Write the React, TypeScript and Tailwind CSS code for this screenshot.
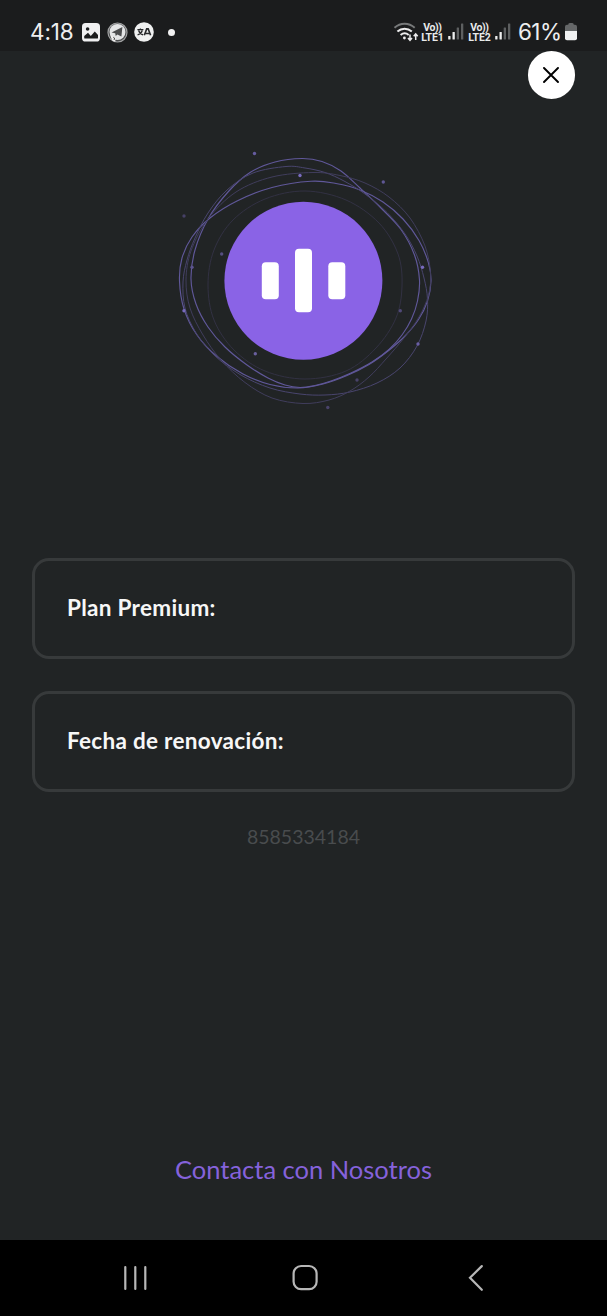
type Pt = [number, number];

const RINGS: { pts: Pt[]; color: string; width: number }[] = [
  {
    color: '#60589a', width: 1.15,
    pts: [[302, 158.5], [322, 161.5], [341, 171], [360, 188], [381, 208], [401, 229.5], [414.5, 255], [419.5, 280], [417.5, 301], [411.5, 319], [402, 335], [389, 349.5], [372, 362], [351, 373], [331, 381], [315, 385.5], [300, 387.5], [285, 385], [268, 378], [247, 365], [225, 347], [208, 327], [196, 304], [191, 279], [195, 250], [208, 219], [228, 192], [250, 172.5], [275, 162]],
  },
  {
    color: '#60589a', width: 1.15,
    pts: [[311, 181.3], [336, 183.5], [360, 190], [383, 202], [403, 219], [419, 240.5], [428.5, 263], [431, 281], [427.5, 301], [418.5, 319.5], [404.5, 336.5], [388, 351], [369, 364.5], [347, 375.5], [323, 384], [298, 388], [270, 384.5], [243, 374], [217, 356.5], [197, 335], [184, 309], [179.500, 281], [182, 258], [192, 237], [210, 218], [237, 201], [272, 187.5]],
  },
  {
    color: '#49456e', width: 1,
    pts: [[286, 166.5], [305, 168], [325, 172.5], [344, 181], [365, 194], [387, 212.5], [405, 234], [417, 256], [424, 278], [427.5, 299], [426, 321], [417, 346], [400, 368], [377, 383], [350, 392], [325, 395], [300, 394], [270, 388], [240, 374.5], [214, 355], [196, 333], [185, 308], [183, 282], [187, 260], [195, 238], [208, 213], [227, 190], [253, 173]],
  },
  {
    color: '#403d5c', width: 1,
    pts: [[313, 172.5], [340, 175.5], [365, 183], [389, 197], [410, 218], [425, 246], [430.5, 273], [428.5, 295], [419, 317], [404, 338], [386, 359], [369, 377], [350, 391], [329, 400], [303, 403.5], [272, 398], [245, 382.5], [221, 360], [203, 335], [190, 308], [186, 280], [191, 251], [208, 219], [236, 192], [272, 177]],
  },
  {
    color: '#323143', width: 1,
    pts: [[305, 191], [346, 200], [379, 223], [398, 254], [402, 286], [396, 318], [376, 348], [346, 371], [305, 379], [265, 371], [234, 350], [214, 320], [208, 285], [214, 250], [233, 220], [265, 199]],
  },
];

const DOTS: { x: number; y: number; color: string }[] = [
  { x: 254.5, y: 153.5, color: '#665ca0' },
  { x: 300, y: 175.5, color: '#7a6dc0' },
  { x: 383.3, y: 182, color: '#5f5794' },
  { x: 184, y: 216, color: '#464166' },
  { x: 221.7, y: 254, color: '#554e80' },
  { x: 192, y: 267.3, color: '#5c548e' },
  { x: 422.5, y: 267.3, color: '#786bbd' },
  { x: 184, y: 310.7, color: '#786bbd' },
  { x: 400.3, y: 310.7, color: '#504978' },
  { x: 418, y: 344, color: '#6a5fa5' },
  { x: 255.3, y: 353.7, color: '#6a609f' },
  { x: 357, y: 380, color: '#49436a' },
  { x: 327.8, y: 407.5, color: '#49436a' },
];

function closedCurve(pts: Pt[]): string {
  const n = pts.length;
  let d = `M${pts[0][0]} ${pts[0][1]}`;
  for (let i = 0; i < n; i++) {
    const a = pts[(i - 1 + n) % n];
    const b = pts[i];
    const c = pts[(i + 1) % n];
    const e = pts[(i + 2) % n];
    d += `C${b[0] + (c[0] - a[0]) / 6} ${b[1] + (c[1] - a[1]) / 6} ${c[0] - (e[0] - b[0]) / 6} ${c[1] - (e[1] - b[1]) / 6} ${c[0]} ${c[1]}`;
  }
  return d + 'Z';
}

function Logo() {
  return (
    <svg viewBox="170 140 270 280" className="h-[280px] w-[270px] shrink-0" fill="none" aria-hidden="true">
      {RINGS.map((r, i) => (
        <path key={i} d={closedCurve(r.pts)} stroke={r.color} strokeWidth={r.width} />
      ))}
      {DOTS.map((p, i) => (
        <circle key={i} cx={p.x} cy={p.y} r="1.7" fill={p.color} />
      ))}
      <circle cx="303.4" cy="280.8" r="79" fill="#8a63e6" />
      <rect x="261.8" y="262.2" width="17" height="37" rx="4" fill="#fff" />
      <rect x="295" y="248.8" width="17" height="63.5" rx="4" fill="#fff" />
      <rect x="328.3" y="262.2" width="17" height="37" rx="4" fill="#fff" />
    </svg>
  );
}

function ImageIcon() {
  return (
    <svg viewBox="0 0 18 19" className="h-[19px] w-[18px]" aria-hidden="true">
      <rect width="18" height="18.5" rx="3.6" fill="#f0f0f1" />
      <circle cx="5.6" cy="6" r="1.8" fill="#1b1c1d" />
      <path d="M2.2 14.7V13L6 9.8l2.8 3.3 4-4.7 3.2 3.7v2.600q0 .9-1 .9H3q-.8 0-.8-.9Z" fill="#1b1c1d" />
    </svg>
  );
}

function TelegramIcon() {
  return (
    <svg viewBox="0 0 21 21" className="h-[21px] w-[21px]" aria-hidden="true">
      <circle cx="10.5" cy="10.5" r="9.500" fill="#4b4c4d" stroke="#a2a3a4" strokeWidth="1.2" />
      <circle cx="10.5" cy="10" r="8" fill="#e4e5e6" />
      <path d="M4.600 10.600 15.400 4.900l-1 9.500-4-2-1.700 1.700-.5-2.800Z" fill="#4c4d4e" />
      <path d="M3.2 13.2 8.7 16l-.5 3.700-3-1.200Z" fill="#f1f1f1" />
      <path d="m6.3 15.3 1.2.7-.4 2" stroke="#333" strokeWidth="0.9" fill="none" />
    </svg>
  );
}

function TranslateIcon() {
  return (
    <svg viewBox="0 0 20 20" className="h-5 w-5" aria-hidden="true">
      <circle cx="10" cy="10" r="9.8" fill="#eff0f0" />
      <path d="M3.4 7.7h6M6.4 6.5v1.2M4.6 8.5c.6 2 2.3 3.6 4.5 4.4M8.3 8.5c-.7 2-2.4 3.7-4.7 4.4" stroke="#27282a" strokeWidth="1.3" fill="none" />
      <path d="m10.3 13.2 2.4-6.3h1.5l2.4 6.3M11.4 11.5h4.2" stroke="#27282a" strokeWidth="1.6" fill="none" />
    </svg>
  );
}

function WifiIcon() {
  return (
    <svg viewBox="392 20 26 23" className="h-[23px] w-[26px]" fill="none" aria-hidden="true">
      <path d="M393.5 26.7c6-5.3 14.2-5.3 20.2 0" stroke="#77797a" strokeWidth="2" />
      <path d="M396.4 30.5c4.2-3.8 10.2-3.8 14.4 0" stroke="#ececed" strokeWidth="2" />
      <path d="M399.6 34c2.5-2.2 5.600-2.200 8.100 0" stroke="#ececed" strokeWidth="2" />
      <circle cx="403.4" cy="37" r="1.4" fill="#ececed" />
      <path d="M409 33.5v5.500M407 37l2 2.300 2-2.300M414.700 39v-6M412.700 35.300l2-2.300 2 2.300" stroke="#ececed" strokeWidth="1.5" />
    </svg>
  );
}

function SignalIcon() {
  return (
    <svg viewBox="0 0 16 18" className="h-[18px] w-4" aria-hidden="true">
      <rect x="0.2" y="13" width="2.3" height="3.5" rx="0.5" fill="#eee" />
      <rect x="4.5" y="9" width="2.3" height="7.5" rx="0.5" fill="#eee" />
      <rect x="8.7" y="4.5" width="2.3" height="12" rx="0.5" fill="#5d5f60" />
      <rect x="13" y="0.5" width="2.3" height="16" rx="0.5" fill="#5d5f60" />
    </svg>
  );
}

function VoLte({ line }: { line: number }) {
  return (
    <div className="flex w-[23px] flex-col items-center pt-[2px] font-['Roboto',sans-serif] text-[10.5px] font-bold leading-[10px] text-[#e9eaea]">
      <span className="tracking-[-0.4px]">Vo))</span>
      <span className="tracking-[-0.1px]">LTE{line}</span>
    </div>
  );
}

function BatteryIcon() {
  return (
    <svg viewBox="0 0 12 18" className="h-[18px] w-3" aria-hidden="true">
      <path d="M3.2 1.7Q3.2 0 4.7 0h2.6q1.5 0 1.5 1.7H10q2 0 2 2V8H0V3.7q0-2 2-2Z" fill="#656768" />
      <path d="M0 8h12v7.3q0 2-2 2H2q-2 0-2-2Z" fill="#f0f0f1" />
    </svg>
  );
}

function StatusBar() {
  return (
    <header className="flex h-[51px] shrink-0 items-start bg-[#1b1c1d] pt-[19px] font-['Inter',sans-serif] text-[#eeeeef]">
      <div className="flex h-[26px] items-center pl-[30px]">
        <span className="w-[44px] whitespace-nowrap text-[22.5px] tracking-[-0.1px]">4:18</span>
        <div className="ml-[8px]"><ImageIcon /></div>
        <div className="ml-[7px]"><TelegramIcon /></div>
        <div className="ml-[6px]"><TranslateIcon /></div>
        <span className="ml-[14px] h-[7px] w-[7px] rounded-full bg-[#f1f1f1]" />
      </div>
      <div className="ml-auto flex h-[26px] items-center pr-[30px]">
        <WifiIcon />
        <div className="ml-[2px]"><VoLte line={1} /></div>
        <div className="ml-[4px]"><SignalIcon /></div>
        <div className="ml-[4px]"><VoLte line={2} /></div>
        <div className="ml-[4px]"><SignalIcon /></div>
        <span className="ml-[7px] w-[43px] whitespace-nowrap text-[22.5px] tracking-[-0.6px]">61%</span>
        <div className="ml-[4px]"><BatteryIcon /></div>
      </div>
    </header>
  );
}

function InfoCard({ label }: { label: string }) {
  return (
    <div className="flex h-[101px] items-center rounded-[17px] border-[3px] border-[#373a3b] px-8 pb-[2px] text-[22.5px] font-bold tracking-[0.3px] text-[#f7f7f7]">
      {label}
    </div>
  );
}

export default function App() {
  return (
    <div className="flex h-[1316px] w-[607px] flex-col overflow-hidden bg-[#212425] font-['Lato',sans-serif]">
      <StatusBar />
      <main className="flex flex-1 flex-col">
        <div className="flex h-[48px] justify-end pr-[32px]">
          <button aria-label="Cerrar" className="flex h-[47.5px] w-[47.5px] items-center justify-center rounded-full bg-white">
            <svg viewBox="0 0 16 16" className="h-4 w-4" aria-hidden="true">
              <path d="m1 1 14 14M15 1 1 15" stroke="#000" strokeWidth="1.9" strokeLinecap="round" />
            </svg>
          </button>
        </div>
        <div className="mt-[41px] flex pl-[170px]"><Logo /></div>
        <section className="mt-[138px] flex flex-col gap-[32px] pl-[32px] pr-[32px]">
          <InfoCard label="Plan Premium:" />
          <InfoCard label="Fecha de renovación:" />
        </section>
        <p className="mt-[30px] text-center text-[19.5px] leading-[30px] text-[#494c4e]">8585334184</p>
        <a className="mt-auto mb-[51px] text-center text-[25.5px] leading-10 text-[#8562db]">Contacta con Nosotros</a>
      </main>
      <nav className="flex h-[76px] shrink-0 items-center bg-black pl-[123px]">
        <svg viewBox="0 0 24 26" className="h-[26px] w-6" aria-hidden="true">
          <path d="M2.3 2v22M12.3 2v22M22.3 2v22" stroke="#b7b7b7" strokeWidth="2.2" strokeLinecap="round" />
        </svg>
        <svg viewBox="0 0 28 28" className="ml-[144px] h-7 w-7" fill="none" aria-hidden="true">
          <rect x="2.6" y="2" width="23" height="23.2" rx="7.5" stroke="#b7b7b7" strokeWidth="2.2" />
        </svg>
        <svg viewBox="0 0 18 28" className="ml-[148px] h-7 w-[18px]" fill="none" aria-hidden="true">
          <path d="M14.8 2.1 3 13.8l11.800 12" stroke="#b7b7b7" strokeWidth="2.2" strokeLinecap="round" />
        </svg>
      </nav>
    </div>
  );
}
